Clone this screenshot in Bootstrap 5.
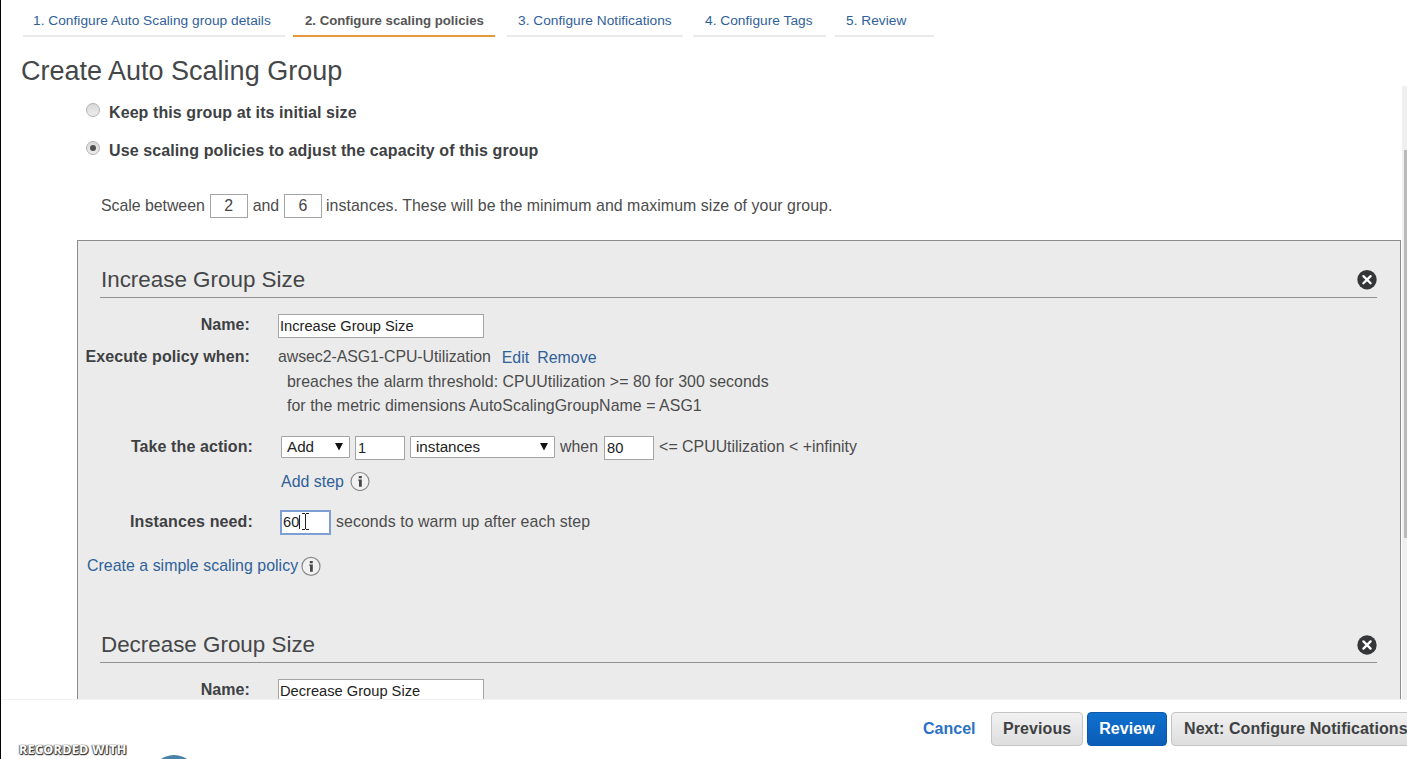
<!DOCTYPE html>
<html lang="en">
<head>
<meta charset="utf-8">
<title>Create Auto Scaling Group</title>
<meta name="viewport" content="width=device-width, initial-scale=1">
<link rel="stylesheet" href="https://cdn.jsdelivr.net/npm/bootstrap@5.3.0/dist/css/bootstrap.min.css">
<style>
  body { font-family: "Liberation Sans", Arial, sans-serif; font-size: 15.9px; line-height: 20px; letter-spacing: .03px; color: #4c4c4c; background: #fff; }
  a { color: #2f6199; text-decoration: none; }
  .wizard { height: 759px; border-left: 1px solid #000; }
  b, .strong-label { font-size: 16px; font-weight: 700; letter-spacing: .09px; color: #3e4143; }

  /* step tabs */
  .steps { height: 37px; padding-left: 22px; font-size: 13.7px; letter-spacing: .03px; }
  .steps .nav-link { height: 37px; padding: 11px 0 0 10px; border-bottom: 2px solid #e9eaec; color: #2f6199; white-space: nowrap; flex: none; }
  .steps .nav-link:nth-child(1) { width: 262px; margin-right: 8px; }
  .steps .nav-link:nth-child(2) { width: 202px; margin-right: 12px; padding-left: 12px; font-size: 13.2px; letter-spacing: 0; }
  .steps .nav-link:nth-child(3) { width: 176px; margin-right: 10px; padding-left: 11px; }
  .steps .nav-link:nth-child(4) { width: 133px; margin-right: 9px; padding-left: 12px; }
  .steps .nav-link:nth-child(5) { width: 99px; padding-left: 11px; }
  .steps .nav-link.active { border-color: #e5983c; color: #555; font-weight: 700; }

  .page-title { height: 49px; padding: 17px 0 0 20px; font-size: 27px; line-height: 34px; letter-spacing: 0; font-weight: 400; color: #444648; }

  /* scrolling region */
  .viewport { height: 613px; }
  .choices { width: 1401px; }
  .choice { padding-left: 85px; height: 38px; }
  .choice b { padding-top: 2px; }
  .radio-dot { width: 14px; height: 14px; margin: 0 9px 5px 0; border: 1px solid #b2b2b2; border-radius: 50%; background: linear-gradient(#d9d9d9, #ececec); flex: none; }
  .radio-dot.on::after { content: ""; display: block; width: 6px; height: 6px; margin: 3px; border-radius: 50%; background: #505050; }
  .range-line { padding-left: 100px; height: 24px; margin-top: 25px; letter-spacing: 0; }
  .field { flex: none; height: 24px; padding: 0 1px 1px; border: 1px solid #a4a4a4; border-radius: 0; font-size: 14.67px; letter-spacing: 0; line-height: 20px; color: #222; background-color: #fff; }
  .field-num { width: 38px; padding: 0 1px; text-align: center; font-size: 15.9px; color: #444; }
  .field-name { width: 206px; }
  .field-short { width: 50px; padding-left: 2px; }
  .field-focus { width: 51px; height: 25px; border: 2px solid #7d9fd4; padding-left: 1px; }
  .picker { flex: none; height: 22px; padding: 0 5px; border: 1px solid #a4a4a4; border-radius: 1px; font-size: 15.2px; letter-spacing: 0; line-height: 20px; color: #222;
    background: #fff url("data:image/svg+xml,%3Csvg xmlns='http://www.w3.org/2000/svg' width='8' height='8'%3E%3Cpath d='M0 0h8L4 7.5z' fill='%23111'/%3E%3C/svg%3E") no-repeat right 6px top 6px / 8px 8px; }

  .policy-panel { width: 1324px; height: 600px; margin: 22px 0 0 76px; border: 1px solid #8c8c8c; background: #ebebeb; }
  .policy-head { height: 32px; margin: 25px 23px 0 22px; border-bottom: 1px solid #929292; color: #444648; }
  .policy-head h2 { padding: 1px 0 0 1px; font-size: 22.4px; line-height: 26px; font-weight: 400; letter-spacing: 0; }
  .form-line { white-space: nowrap; }
  .label-a { width: 172px; margin-right: 28px; text-align: right; }
  .label-b { width: 175px; margin-right: 28px; text-align: right; }
  .label-a, .label-b { flex: none; }

  /* scrollbar */
  .track { width: 5px; background: #f0f0f0; padding: 64px 0 0 2px; }
  .thumb { height: 388px; background: #bababa; }

  /* footer */
  .actions { height: 60px; border-top: 1px solid #f1f1f1; padding: 12px 0 0 922px; }
  .actions .btn { flex: none; height: 34px; padding: 0 11px; border: 1px solid #c4c4c4; border-radius: 4px; font-size: 16px; line-height: 32px; font-weight: 700; letter-spacing: .08px; color: #3e4143; background: linear-gradient(#f1f1f1, #dedede); white-space: nowrap; }
  .actions .btn-go { border-color: #0a59ae; color: #fff; background: linear-gradient(#1070cd, #0a5db8); }
  .cancel { font-size: 16px; font-weight: 700; color: #2b72c4; letter-spacing: 0; width: 68px; flex: none; line-height: 33px; }
  .recorder { left: 18px; top: 742px; font: 700 12.5px/16px "Open Sans", sans-serif; letter-spacing: .35px; color: #fff; text-shadow: 0 0 1px #555, 1px 1px 1px #333, -1px 0 1px #888, 0 1px 1px #444, 1px 0 1px #666; }
  .disc { left: 150px; top: 755px; width: 46px; height: 46px; border-radius: 50%; background: #4b83a8; }
</style>
</head>
<body>
<div class="wizard d-flex flex-column position-relative overflow-hidden">
  <nav class="steps nav flex-nowrap">
    <a class="nav-link" href="#">1. Configure Auto Scaling group details</a>
    <a class="nav-link active" href="#">2. Configure scaling policies</a>
    <a class="nav-link" href="#">3. Configure Notifications</a>
    <a class="nav-link" href="#">4. Configure Tags</a>
    <a class="nav-link" href="#">5. Review</a>
  </nav>
  <h1 class="page-title mb-0">Create Auto Scaling Group</h1>

  <div class="viewport d-flex overflow-hidden flex-shrink-0">
    <main class="choices flex-shrink-0">
      <div class="choice d-flex align-items-center" style="margin-top:7px"><span class="radio-dot"></span><b>Keep this group at its initial size</b></div>
      <div class="choice d-flex align-items-center"><span class="radio-dot on"></span><b style="letter-spacing:.11px">Use scaling policies to adjust the capacity of this group</b></div>
      <div class="range-line d-flex align-items-center">
        <span style="letter-spacing:-.04px">Scale between</span>
        <input class="field field-num" style="margin:0 5px" value="2">
        <span style="letter-spacing:-.1px">and</span>
        <input class="field field-num" style="margin:0 4px 0 5px" value="6">
        <span style="letter-spacing:.05px">instances. These will be the minimum and maximum size of your group.</span>
      </div>

      <section class="policy-panel">
        <div class="policy-head d-flex justify-content-between align-items-start">
          <h2 class="mb-0">Increase Group Size</h2>
          <svg width="20" height="20" viewBox="0 0 20 20" style="margin-top:4px"><circle cx="10" cy="9.700" r="9.7" fill="#353637"/><path d="M6.4 6.1l7.2 7.2M13.6 6.1l-7.2 7.2" stroke="#fff" stroke-width="2.3" stroke-linecap="round"/></svg>
        </div>
        <div class="form-line d-flex" style="margin-top:16px;height:33px">
          <span class="label-a strong-label" style="padding-top:1px">Name:</span>
          <input class="field field-name" value="Increase Group Size">
        </div>
        <div class="form-line d-flex" style="height:89px">
          <span class="label-a strong-label">Execute policy when:</span>
          <div class="flex-column d-flex" style="gap:4.5px">
            <div class="d-flex"><span style="letter-spacing:-.07px">awsec2-ASG1-CPU-Utilization</span><a href="#" style="margin:1px 0 -1px 11px">Edit</a><a href="#" style="margin:1px 0 -1px 8px">Remove</a></div>
            <div style="padding-left:9px">breaches the alarm threshold: CPUUtilization &gt;= 80 for 300 seconds</div>
            <div style="padding-left:9px;letter-spacing:.05px">for the metric dimensions AutoScalingGroupName = ASG1</div>
          </div>
        </div>
        <div class="form-line d-flex" style="height:35px">
          <span class="label-b strong-label" style="padding-top:1px">Take the action:</span>
          <select class="picker form-select" style="width:69px"><option>Add</option></select>
          <input class="field field-short" style="margin:0 5px" value="1">
          <select class="picker form-select" style="width:145px"><option>instances</option></select>
          <span style="margin:0 6px 0 5px;padding-top:1px">when</span>
          <input class="field field-short" style="margin-right:5px" value="80">
          <span style="padding-top:1px;letter-spacing:0">&lt;= CPUUtilization &lt; +infinity</span>
        </div>
        <div class="form-line d-flex" style="height:40px;padding-left:203px">
          <a href="#" style="padding-top:1px">Add step</a>
          <svg width="20" height="20" viewBox="0 0 20 20" style="margin-left:6px"><circle cx="10" cy="10.500" r="9" fill="#f1f1f1" stroke="#8a8a8a" stroke-width="1.2"/><path d="M8.800 5h3v2.300h-3zM8.200 8.500h3.600v7.300H9v-6h-.8z" fill="#484848"/></svg>
        </div>
        <div class="form-line d-flex position-relative" style="height:44px">
          <span class="label-b strong-label" style="padding-top:1px;letter-spacing:.14px">Instances need:</span>
          <input class="field field-focus" style="margin:-1px 5px 0 -1px" value="60">
          <span style="padding-top:1px;letter-spacing:.07px">seconds to warm up after each step</span>
          <svg class="position-absolute" width="14" height="20" viewBox="0 0 14 20" style="left:219px;top:0"><path d="M2.5 4v14" stroke="#222"/><path d="M5 2.500h3M9 2.500h3M5 18.500h3M9 18.500h3M8.500 3v15" stroke="#222" fill="none"/></svg>
        </div>
        <div class="form-line d-flex" style="height:48px;padding-left:9px">
          <a href="#" style="padding-top:1px">Create a simple scaling policy</a>
          <svg width="20" height="20" viewBox="0 0 20 20" style="margin-left:3px;margin-top:1px"><circle cx="10" cy="10.400" r="9" fill="#f1f1f1" stroke="#8a8a8a" stroke-width="1.2"/><path d="M8.800 5h3v2.300h-3zM8.200 8.500h3.600v7.300H9v-6h-.8z" fill="#484848"/></svg>
        </div>
        <div class="policy-head d-flex justify-content-between align-items-start" style="margin-top:28px">
          <h2 class="mb-0">Decrease Group Size</h2>
          <svg width="20" height="20" viewBox="0 0 20 20" style="margin-top:4px"><circle cx="10" cy="10" r="9.7" fill="#353637"/><path d="M6.4 6.4l7.2 7.2M13.6 6.4l-7.2 7.2" stroke="#fff" stroke-width="2.3" stroke-linecap="round"/></svg>
        </div>
        <div class="form-line d-flex" style="margin-top:16px;height:32px">
          <span class="label-a strong-label" style="padding-top:1px">Name:</span>
          <input class="field field-name" value="Decrease Group Size">
        </div>
      </section>
    </main>
    <div class="track flex-shrink-0"><div class="thumb"></div></div>
  </div>

  <footer class="actions d-flex flex-shrink-0">
    <a class="cancel" href="#">Cancel</a>
    <button class="btn" style="width:92px;margin-right:4px">Previous</button>
    <button class="btn btn-go" style="width:80px;margin-right:4px">Review</button>
    <button class="btn" style="width:250px;padding-left:12px;text-align:left">Next: Configure Notifications</button>
  </footer>
  <div class="recorder position-absolute">RECORDED WITH</div>
  <div class="disc position-absolute"></div>
</div>
<script src="https://cdn.jsdelivr.net/npm/bootstrap@5.3.0/dist/js/bootstrap.bundle.min.js"></script>
</body>
</html>
